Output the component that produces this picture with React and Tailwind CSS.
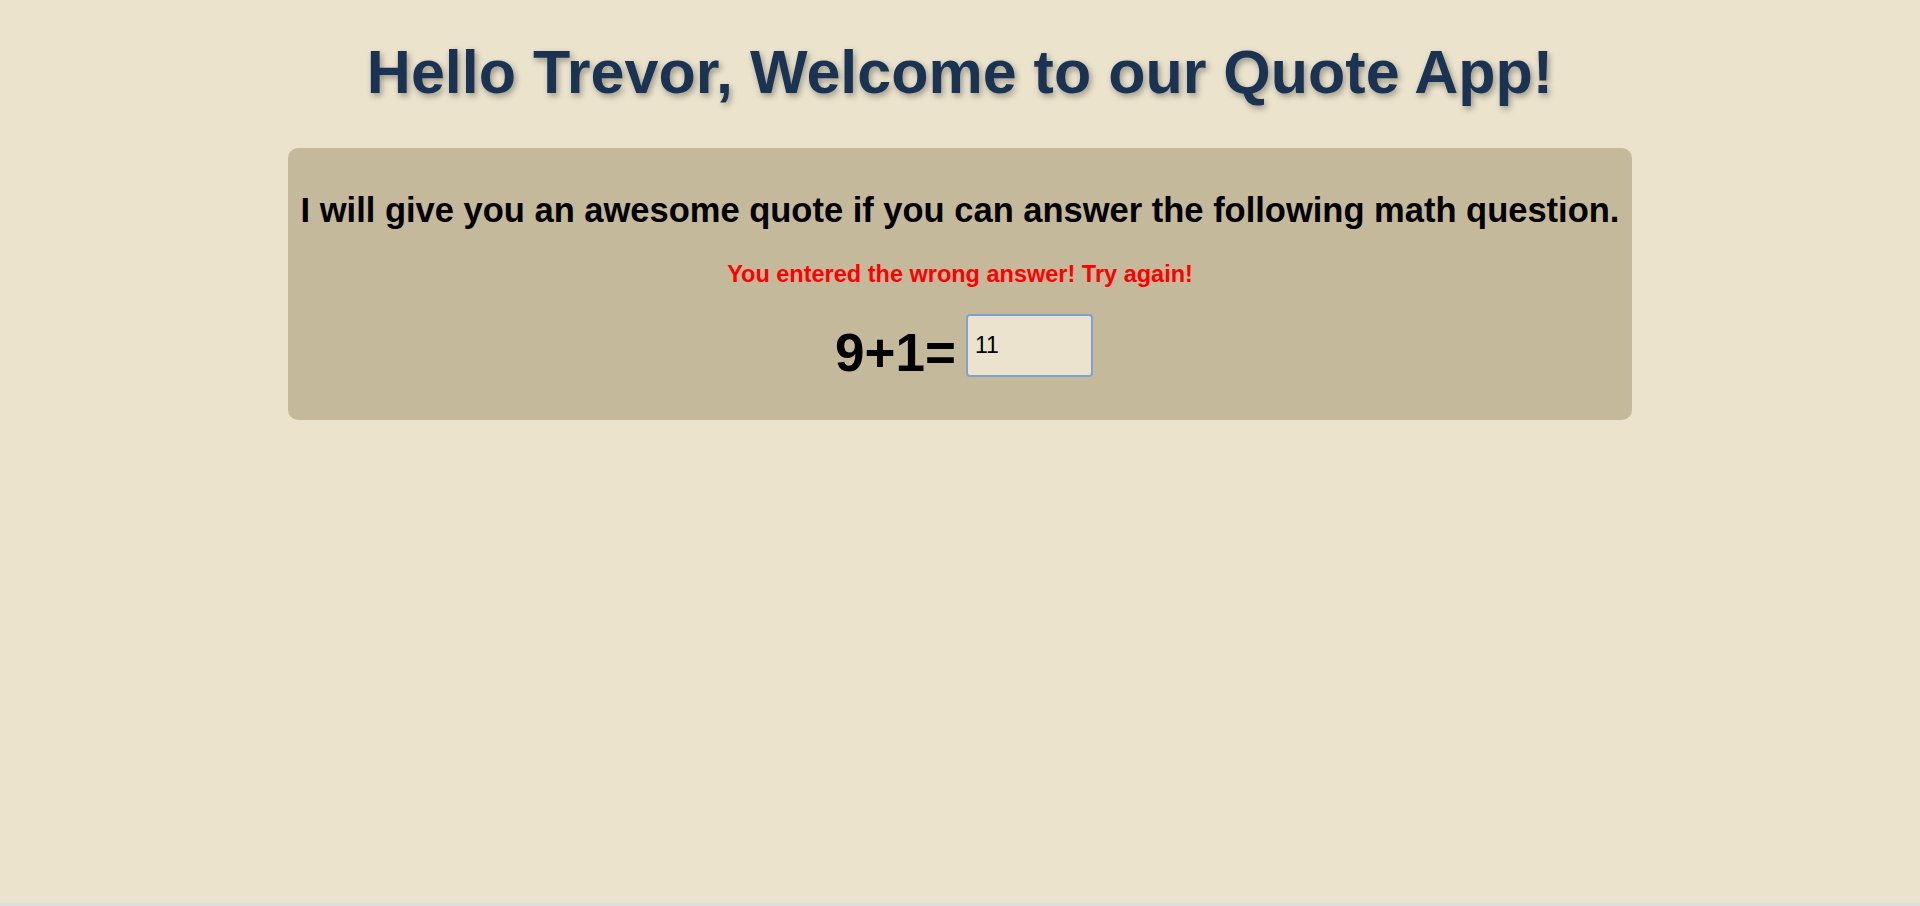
import React, { useState } from 'react';

const QuoteApp = () => {
  const [answer, setAnswer] = useState('11');
  const name = 'Trevor';
  const a = 9;
  const b = 1;
  const wrong = answer !== '' && Number(answer) !== a + b;

  return (
    <div className="min-h-screen bg-[#dedede] font-['Liberation_Sans',Arial,sans-serif]">
      <div className="h-[903px] bg-[#ebe3cc] flex flex-col items-center">
        <h1 className="pt-[38px] text-[61px] leading-[69px] font-bold text-[#1a3352] [text-shadow:2px_3px_6px_rgba(0,0,0,0.35)]">
          Hello {name}, Welcome to our Quote App!
        </h1>

        <div className="mt-[41px] w-[70%] rounded-[10px] bg-[#c5b99b] pt-[42px] pb-[43px] flex flex-col items-center">
          <h2 className="text-[34.5px] leading-[40px] font-bold text-black whitespace-nowrap">
            I will give you an awesome quote if you can answer the following math question.
          </h2>

          {wrong && (
            <p className="mt-[31px] text-[23.5px] leading-[27px] font-bold text-[#ff0000]">
              You entered the wrong answer! Try again!
            </p>
          )}

          <div className="mt-[26px] flex items-end">
            <span className="ml-[8px] text-[53px] leading-[49px] font-bold text-black">
              {a}+{b}=
            </span>
            <input
              type="text"
              autoFocus
              value={answer}
              onChange={(e) => setAnswer(e.target.value)}
              className="ml-[10px] w-[127px] h-[63px] rounded-[4px] border-2 border-[#7ea1d2] bg-[#ebe3cd] px-[7px] text-[23px] text-black outline-none"
            />
          </div>
        </div>
      </div>
    </div>
  );
};

export default function App() {
  return <QuoteApp />;
}
